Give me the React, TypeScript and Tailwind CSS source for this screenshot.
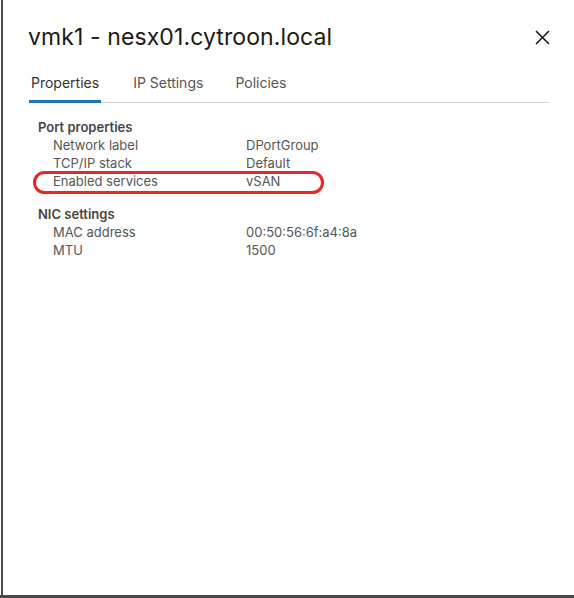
import React from "react";

const rows1 = [
  ["Network label", "DPortGroup"],
  ["TCP/IP stack", "Default"],
];

export default function App() {
  return (
    <div className="w-[574px] h-[598px] bg-white overflow-hidden" style={{ fontFamily: "Inter, 'Noto Sans', sans-serif" }}>
      <div className="h-[595px] border-l-2 border-[#4a4a4a] bg-white flex flex-col pl-[25px] pr-[27px] ml-px">
        <div className="flex items-center justify-between pt-[19px] h-[55px]">
          <h1 className="text-[23px] leading-[30px] text-[#1a1a1a] tracking-[0.1px]">vmk1 - nesx01.cytroon.local</h1>
          <button className="w-[16px] h-[16px] flex items-center justify-center mr-[-3px]">
            <svg width="15" height="15" viewBox="0 0 15 15">
              <path d="M1 1 L14 14 M14 1 L1 14" stroke="#111" strokeWidth="1.5" />
            </svg>
          </button>
        </div>
        <div className="mt-[17px] ml-px flex border-b border-[#d7d7d7] w-[520px] text-[14px] text-[#565656]">
          <div className="px-[2px] pb-[7px] border-b-[3px] border-[#1b75bb] mb-[-1px] text-[#333]">Properties</div>
          <div className="ml-[32px] pb-[7px]">IP Settings</div>
          <div className="ml-[32px] pb-[7px]">Policies</div>
        </div>
        <div className="pl-[10px] pt-[15px] text-[13px] leading-[18px] text-[#565656]">
          <div className="font-semibold text-[#454545]">Port properties</div>
          {rows1.map(([k, v]) => (
            <div key={k} className="flex">
              <div className="pl-[15px] w-[208px]">{k}</div>
              <div>{v}</div>
            </div>
          ))}
          <div className="relative flex">
            <div className="pl-[15px] w-[208px]">Enabled services</div>
            <div>vSAN</div>
            <div className="absolute left-[-5px] top-[-1px] w-[291px] h-[23px] border-[3px] border-[#e8262a] rounded-full" />
          </div>
          <div className="font-semibold text-[#454545] mt-[15px]">NIC settings</div>
          <div className="flex">
            <div className="pl-[15px] w-[208px]">MAC address</div>
            <div>00:50:56:6f:a4:8a</div>
          </div>
          <div className="flex">
            <div className="pl-[15px] w-[208px]">MTU</div>
            <div>1500</div>
          </div>
        </div>
      </div>
      <div className="h-[3px] bg-[#4a4a4a]" />
    </div>
  );
}
